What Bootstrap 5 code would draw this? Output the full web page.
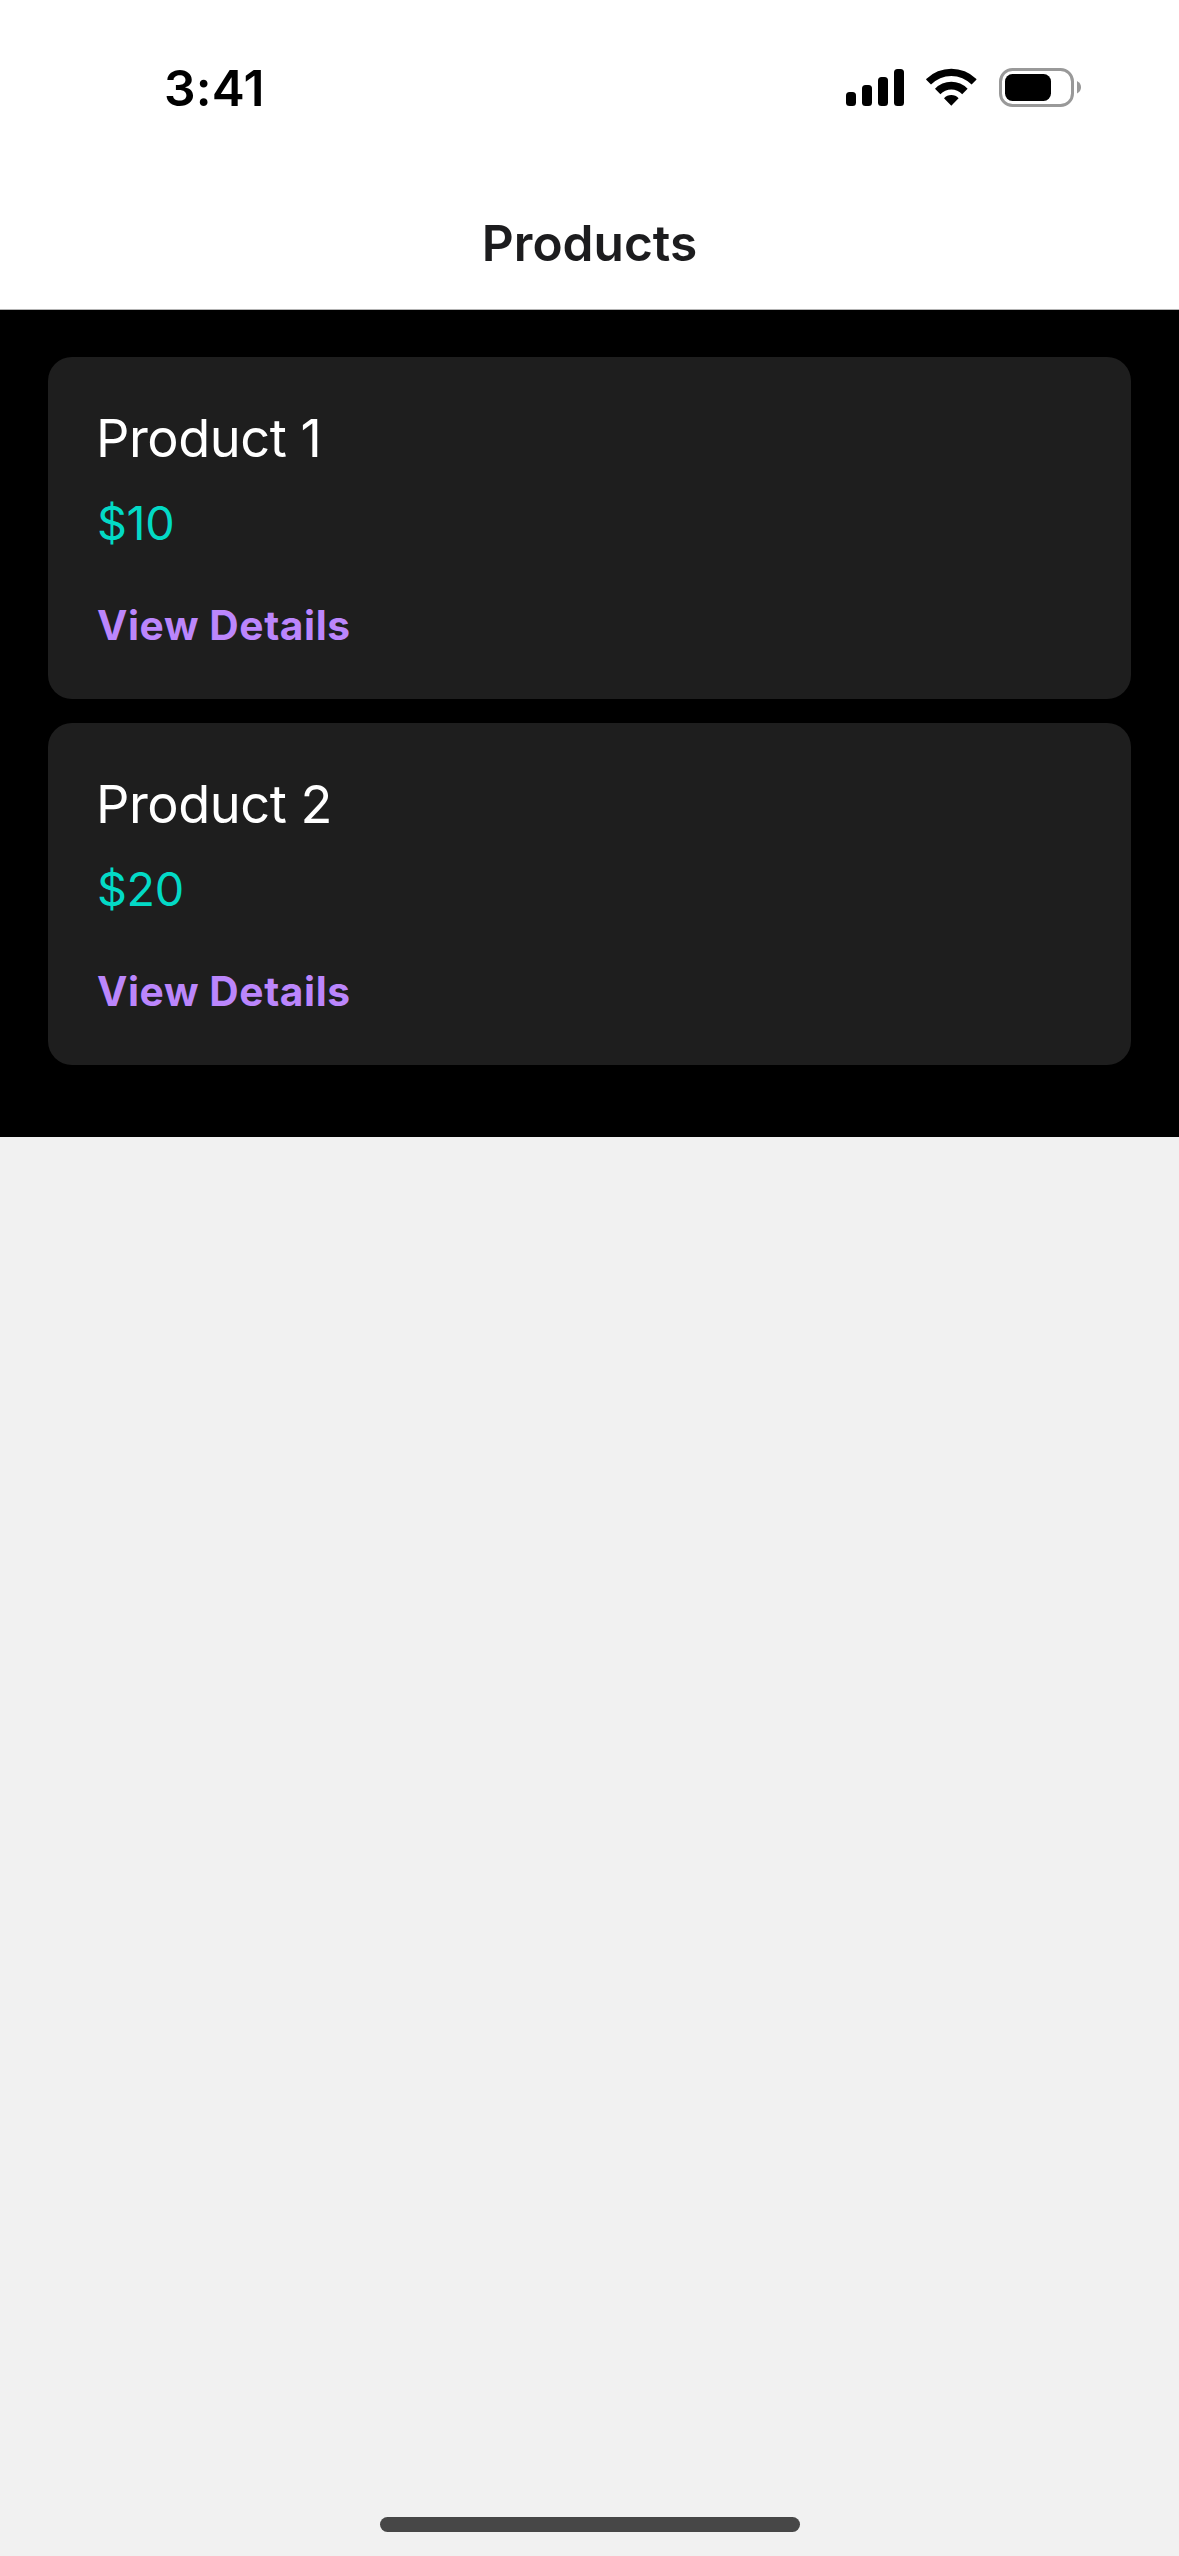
<!DOCTYPE html>
<html lang="en">
<head>
<meta charset="utf-8">
<meta name="viewport" content="width=device-width, initial-scale=1">
<title>Products</title>
<link rel="stylesheet" href="https://cdn.jsdelivr.net/npm/bootstrap@5.3.0/dist/css/bootstrap.min.css">
<style>
body{font-family:Inter,"Liberation Sans",sans-serif;background:#f1f1f1}
.screen{height:2556px}
.status{height:177px;padding:58px 98px 0 164px}
.clock{font-size:49.6px;line-height:60px;font-weight:600;color:#000;letter-spacing:.2px}
.status-icons{margin-top:10px}
.title-bar{height:133px;border-bottom:1px solid #b3b3b3}
.title-text{font-size:49.6px;line-height:60px;font-weight:600;color:#1c1c1e}
.product-list{padding:47px 48px 72px;gap:24px}
.product{background:#1e1e1e;border-radius:24px;padding:48px}
.product-name{font-size:52.3px;line-height:66px;font-weight:400;margin-bottom:23px;letter-spacing:-.45px}
.price{font-size:46.7px;line-height:58px;color:#03dac6;margin-bottom:48px;padding-left:1px;letter-spacing:-.4px}
.details{font-size:40.7px;line-height:51px;font-weight:700;color:#bb86fc;padding-left:1px;letter-spacing:.6px}
.home-bar{width:420px;height:15px;background:#474747;margin-bottom:24px}
</style>
</head>
<body>
<div class="screen d-flex flex-column">
<header class="bg-white">
<div class="status d-flex justify-content-between align-items-start">
<span class="clock">3:41</span>
<svg class="status-icons" width="235" height="40" viewBox="0 0 235 40">
<rect x="0" y="24" width="10" height="14" rx="3.5"/><rect x="16" y="17" width="10" height="21" rx="3.5"/><rect x="32" y="9" width="10" height="29" rx="3.5"/><rect x="48" y="1" width="10" height="37" rx="3.5"/>
<path d="M80.5 12Q79.8 11.4 80.5 10.8A35.5 35.5 0 0 1 130.1 10.8Q130.8 11.4 130.1 12L125.6 16.6A28 28 0 0 0 85 16.6ZM89 20.8A22.4 22.4 0 0 1 121.6 20.8L116.2 26.2A15 15 0 0 0 94.4 26.2ZM98 30.2A10 10 0 0 1 112.6 30.2L105.3 37.7Z"/>
<rect x="154.5" y="1.5" width="72" height="36" rx="12" fill="none" stroke="#999" stroke-width="3"/><rect x="159" y="6" width="46" height="27" rx="7.5"/>
<path d="M231 13Q235 15 235 19.3T231 25.5Z" fill="#999"/>
</svg>
</div>
<div class="title-bar d-flex justify-content-center align-items-center"><h1 class="title-text m-0">Products</h1></div>
</header>
<main class="product-list bg-black d-flex flex-column">
<section class="product"><h2 class="product-name text-white">Product 1</h2><div class="price">$10</div><a class="details d-block text-decoration-none" href="#">View Details</a></section>
<section class="product"><h2 class="product-name text-white">Product 2</h2><div class="price">$20</div><a class="details d-block text-decoration-none" href="#">View Details</a></section>
</main>
<div class="home-bar rounded-pill mt-auto mx-auto"></div>
</div>
<script src="https://cdn.jsdelivr.net/npm/bootstrap@5.3.0/dist/js/bootstrap.bundle.min.js"></script>
</body>
</html>
